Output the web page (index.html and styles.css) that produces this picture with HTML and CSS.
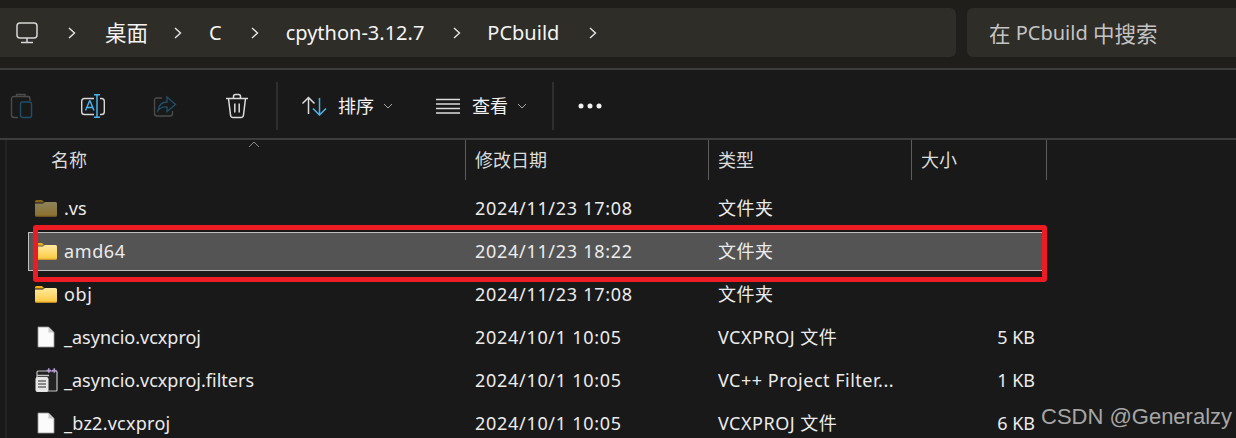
FILE: index.html
```html
<!DOCTYPE html>
<html lang="zh">
<head>
<meta charset="utf-8">
<title>PCbuild</title>
<link rel="stylesheet" href="styles.css">
</head>
<body>
<svg class="defs" width="0" height="0">
  <defs>
    <linearGradient id="fold" x1="0" y1="0" x2="0" y2="1"><stop offset="0" stop-color="#ffeaa0"/><stop offset="1" stop-color="#fcc93f"/></linearGradient>
    <symbol id="folder" viewBox="0 0 24 18">
      <path d="M1 2.500Q1 1 2.500 1H8l2.500 2.500H1Z" fill="#f0ae1a"/>
      <path d="M1 4.500H9l2-1.500H21.500Q23 3 23 4.500V16Q23 17.500 21.500 17.500H2.500Q1 17.500 1 16Z" fill="url(#fold)"/>
      <path d="M1 16.500H23V16.800Q23 17.500 21.500 17.500H2.500Q1 17.500 1 16.800Z" fill="#e8a92a"/>
    </symbol>
    <symbol id="doc" viewBox="0 0 18 22">
      <path d="M1 1H11.500L17 6.500V21H1Z" fill="#fbfbfb" stroke="#9a9a9a" stroke-width=".8"/>
      <path d="M11.500 1V6.500H17Z" fill="#c9c9c9"/>
    </symbol>
  </defs>
</svg>

<header class="topbar">
  <nav class="address">
    <svg class="pc" width="24" height="24" viewBox="0 0 24 24" fill="none" stroke="#d6d6d6" stroke-width="1.500"><rect x="2" y="2" width="20" height="15" rx="3"/><path d="M12 17v4M6 21.500h12"/></svg>
    <svg class="chev" width="10" height="14" viewBox="0 0 10 14" fill="none" stroke="#e6e6e6" stroke-width="1.400"><path d="M2 2l5.500 5L2 12"/></svg>
    <span class="crumb crumb-desk cjk">桌面</span>
    <svg class="chev" width="10" height="14" viewBox="0 0 10 14" fill="none" stroke="#e6e6e6" stroke-width="1.400"><path d="M2 2l5.500 5L2 12"/></svg>
    <span class="crumb">C</span>
    <svg class="chev" width="10" height="14" viewBox="0 0 10 14" fill="none" stroke="#e6e6e6" stroke-width="1.400"><path d="M2 2l5.500 5L2 12"/></svg>
    <span class="crumb">cpython-3.12.7</span>
    <svg class="chev" width="10" height="14" viewBox="0 0 10 14" fill="none" stroke="#e6e6e6" stroke-width="1.400"><path d="M2 2l5.500 5L2 12"/></svg>
    <span class="crumb crumb-last">PCbuild</span>
    <svg class="chev" width="10" height="14" viewBox="0 0 10 14" fill="none" stroke="#e6e6e6" stroke-width="1.400"><path d="M2 2l5.500 5L2 12"/></svg>
  </nav>
  <div class="search"><span class="cjk">在</span>&nbsp;PCbuild&nbsp;<span class="cjk">中搜索</span></div>
</header>

<section class="toolbar">
  <svg class="tool t-paste" width="24" height="26" viewBox="0 0 24 26" fill="none" stroke-width="1.400"><path d="M8 3.500H4Q1.500 3.500 1.500 6V22Q1.500 24.500 4 24.500H8M6.500 3.500V1.500H15V3.500H6.500" stroke="#4b4b4b"/><path d="M15 3.500H18Q20 3.500 20 6V8" stroke="#4b4b4b"/><rect x="10.500" y="9" width="11" height="15.500" rx="2" stroke="#1f4f68"/></svg>
  <svg class="tool t-rename" width="24" height="24" viewBox="0 0 24 24" fill="none" stroke-width="1.400"><path d="M13 4.500H3.500Q.7 4.500 .7 7.300V17.700Q.7 20.500 3.500 20.500H13M19 4.500H20.500Q23.300 4.500 23.300 7.300V17.700Q23.300 20.500 20.500 20.500H19" stroke="#d8d8d8"/><path d="M13 .7H19M16 .7V23.300M13 23.300H19" stroke="#4cb4ec" stroke-width="1.500"/><path d="M4.500 16.500L8.500 7h.6L13 16.500M5.800 13.500H11.800" stroke="#4cb4ec"/></svg>
  <svg class="tool t-share" width="24" height="24" viewBox="0 0 24 24" fill="none" stroke-width="1.400"><path d="M9 4H4Q1.500 4 1.500 6.500V19.500Q1.500 22 4 22H17Q19.500 22 19.500 19.500V17" stroke="#4b4b4b"/><path d="M5 16.500C6 10 10.500 8 14 8V3L22.500 10.500 14 17.500V13C10.500 12.500 7.500 13.500 5 16.500Z" stroke="#1f4f68"/></svg>
  <svg class="tool t-trash" width="24" height="26" viewBox="0 0 24 26" fill="none" stroke="#dcdcdc" stroke-width="1.500"><path d="M1 5.500H23M8.500 5V3.500Q8.500 1.500 10.500 1.500H13.500Q15.500 1.500 15.500 3.500V5M3.500 5.500L5.500 22Q5.800 24.500 8 24.500H16Q18.200 24.500 18.500 22L20.500 5.500M9.800 10.500V19.500M14.200 10.500V19.500"/></svg>
  <i class="vsep first-sep"></i>
  <div class="menu m-sort">
    <svg width="26" height="20" viewBox="0 0 26 20" fill="none" stroke-width="1.500"><path d="M1.500 7.500L7.500 1.500l6 6M7.500 1.500V18" stroke="#dcdcdc"/><path d="M12 12.500l6.500 6.500 6.500-6.500M18.500 19V2" stroke="#4cb4ec"/></svg>
    <span class="mlabel">排序</span>
    <svg class="caret" width="10" height="6" viewBox="0 0 10 6" fill="none" stroke="#a8a8a8" stroke-width="1"><path d="M1 1l4 4 4-4"/></svg>
  </div>
  <div class="menu m-view">
    <svg width="24" height="16" viewBox="0 0 24 16" fill="none" stroke="#dcdcdc" stroke-width="1.300"><path d="M0 1.500H24M0 6H24M0 10.500H24M0 15H24"/></svg>
    <span class="mlabel">查看</span>
    <svg class="caret" width="10" height="6" viewBox="0 0 10 6" fill="none" stroke="#a8a8a8" stroke-width="1"><path d="M1 1l4 4 4-4"/></svg>
  </div>
  <i class="vsep second-sep"></i>
  <svg class="more" width="24" height="6" viewBox="0 0 24 6" fill="#f2f2f2"><circle cx="3" cy="3" r="2.500"/><circle cx="12" cy="3" r="2.500"/><circle cx="21" cy="3" r="2.500"/></svg>
</section>

<main class="files">
  <div class="cols head">
    <div class="hcell h-name">名称<svg class="sort" width="12" height="7" viewBox="0 0 12 7" fill="none" stroke="#8c8c8c" stroke-width="1"><path d="M1 6l5-5 5 5"/></svg></div>
    <div class="hcell">修改日期</div>
    <div class="hcell">类型</div>
    <div class="hcell">大小</div>
  </div>
  <div class="rows">
    <div class="cols row"><div class="name"><svg class="ic dim" width="24" height="18"><use href="#folder"/></svg>.vs</div><div class="date">2024/11/23 17:08</div><div class="type">文件夹</div><div class="size"></div></div>
    <div class="cols row selected"><div class="name"><svg class="ic" width="24" height="18"><use href="#folder"/></svg><span class="track-a">amd64</span></div><div class="date">2024/11/23 18:22</div><div class="type">文件夹</div><div class="size"></div></div>
    <div class="cols row"><div class="name"><svg class="ic" width="24" height="18"><use href="#folder"/></svg><span class="track-a">obj</span></div><div class="date">2024/11/23 17:08</div><div class="type">文件夹</div><div class="size"></div></div>
    <div class="cols row"><div class="name"><svg class="ic docic" width="18" height="22"><use href="#doc"/></svg>_asyncio.vcxproj</div><div class="date">2024/10/1 10:05</div><div class="type">VCXPROJ 文件</div><div class="size">5 KB</div></div>
    <div class="cols row"><div class="name"><svg class="ic" width="24" height="26" viewBox="0 0 24 26"><rect x="3" y="4" width="20" height="20" rx="1" fill="#222" stroke="#c4c4c4" stroke-width="1.200"/><path d="M3 8.500H15" stroke="#c4c4c4" stroke-width="1.500"/><rect x="1.500" y="10" width="13" height="15" rx="2" fill="#e6e6e6"/><path d="M4 14H12M4 17H12M4 20H12" stroke="#2a2a2a" stroke-width="1.200"/><path d="M12.500 3.500H17M14.750 1.200V5.800M18 3.500H22.500M20.250 1.200V5.800" stroke="#b99ad8" stroke-width="1.500"/></svg>_asyncio.vcxproj.filters</div><div class="date">2024/10/1 10:05</div><div class="type">VC++ Project Filter...</div><div class="size">1 KB</div></div>
    <div class="cols row"><div class="name"><svg class="ic docic" width="18" height="22"><use href="#doc"/></svg><span class="track-b">_bz2.vcxproj</span></div><div class="date">2024/10/1 10:05</div><div class="type">VCXPROJ 文件</div><div class="size">6 KB</div></div>
  </div>
</main>

<div class="highlight"></div>
<div class="watermark">CSDN @Generalzy</div>
</body>
</html>
```
FILE: styles.css
```css
* { box-sizing: border-box; }
html, body { margin: 0; height: 100%; }
body {
  width: 1236px;
  height: 438px;
  overflow: hidden;
  position: relative;
  background: #191919;
  color: #f0f0f0;
  font-family: "Noto Sans", "Noto Sans CJK SC", sans-serif;
}
.defs { position: absolute; }
.cjk { font-size: 21.5px; }

.topbar {
  height: 70px;
  padding: 8px 0 11px;
  display: flex;
  gap: 11px;
  background: #201e1a;
  border-bottom: 2px solid #3d3d3d;
}
.address {
  width: 956px;
  display: flex;
  align-items: center;
  padding-left: 15px;
  background: #2e2d28;
  border-radius: 0 6px 6px 0;
  font-size: 20px;
  color: #f4f4f4;
}
.pc { margin-right: 28px; }
.chev { flex: none; }
.crumb { margin: 0 28px 0 26px; line-height: 1; }
.crumb-desk { margin: 0 25px 0 28px; }
.crumb-last { margin: 0 29px 0 25px; }
.search {
  flex: 1;
  display: flex;
  align-items: center;
  padding-left: 22px;
  background: #2e2d28;
  border-radius: 6px 0 0 6px;
  font-size: 20px;
  color: #c4c4c4;
}

.toolbar {
  height: 70px;
  padding-top: 4px;
  display: flex;
  align-items: center;
  background: #191919;
  border-bottom: 2px solid #3d3d3d;
}
.tool { flex: none; }
.t-paste { margin-left: 10px; }
.t-rename { margin-left: 47px; }
.t-share { margin-left: 48px; }
.t-trash { margin-left: 48px; }
.vsep { display: block; width: 2px; height: 48px; background: #2f2f2f; }
.first-sep { margin-left: 27px; }
.second-sep { margin-left: 25px; }
.menu { display: flex; align-items: center; font-size: 18px; color: #f2f2f2; }
.m-sort { margin-left: 23px; }
.m-view { margin-left: 43px; }
.mlabel { margin-left: 11px; line-height: 1; }
.m-view .mlabel { margin-left: 12px; }
.caret { margin-left: 9px; }
.more { margin-left: 24px; }

.files {
  border-left: 2px solid #232323;
  margin-left: 5px;
  height: 298px;
}
.cols {
  display: grid;
  grid-template-columns: 459px 243px 203px 135px;
}
.head { height: 40px; }
.hcell {
  height: 40px;
  padding: 0 0 0 9px;
  display: flex;
  align-items: center;
  font-size: 18px;
  color: #dcdcdc;
  border-right: 1px solid #5c5c5c;
  line-height: 1;
}
.h-name { padding-left: 44px; position: relative; }
.sort { position: absolute; left: 241px; top: 1px; }
.rows { padding-top: 6px; }
.row {
  height: 43px;
  align-items: center;
  font-size: 18px;
  color: #ececec;
  white-space: nowrap;
}
.row > div { padding-left: 9px; line-height: 1; }
.row > .name {
  display: flex;
  align-items: center;
  padding-left: 27px;
}
.row > .date { letter-spacing: .7px; }
.row > .type { letter-spacing: .5px; }
.track-a { letter-spacing: .6px; }
.track-b { letter-spacing: .25px; }
.ic { flex: none; margin-right: 6px; }
.dim { opacity: .5; }
.docic { margin: 0 9px 0 3px; }
.row > .size { padding: 0 12px 0 0; text-align: right; }
.selected { position: relative; }
.selected::before {
  content: "";
  position: absolute;
  left: 21px;
  top: 3px;
  width: 1013px;
  height: 37px;
  background: #545454;
  border: 1px solid #c0c0c0;
}
.selected > div { position: relative; }

.highlight {
  position: absolute;
  left: 33px;
  top: 225px;
  width: 1014px;
  height: 57px;
  border: 5px solid #ed1c24;
  border-radius: 3px;
}
.watermark {
  position: absolute;
  left: 1041px;
  top: 404px;
  font-family: "Liberation Sans", Arial, sans-serif;
  font-size: 22px;
  line-height: 26px;
  color: #a6a6a6;
  white-space: nowrap;
}
```
